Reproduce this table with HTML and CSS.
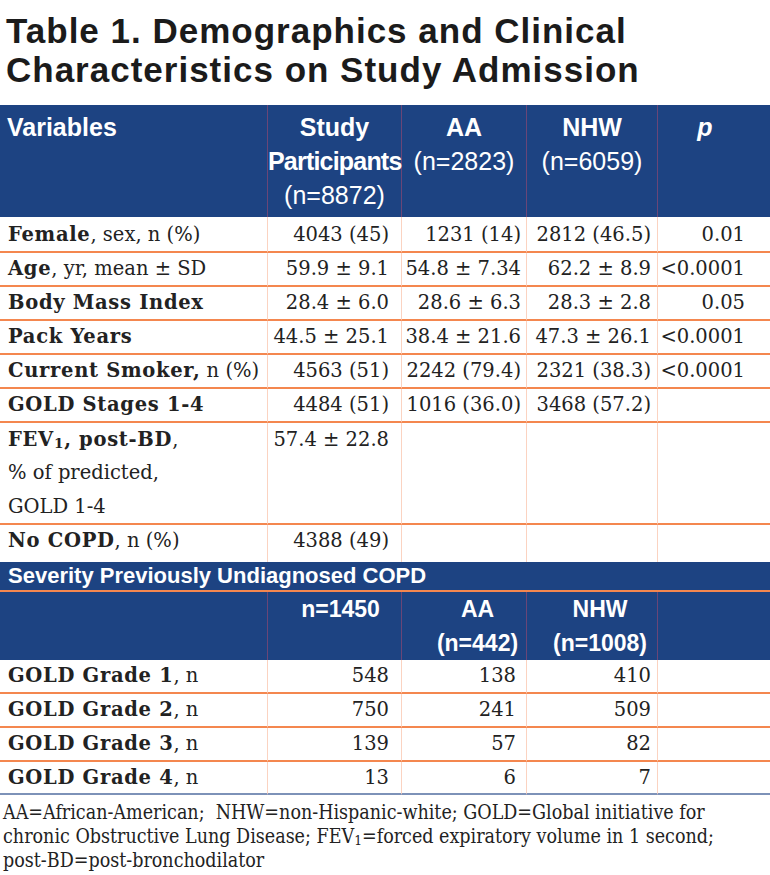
FILE: index.html
```html
<!DOCTYPE html>
<html lang="en">
<head>
<meta charset="utf-8">
<title>Table 1. Demographics and Clinical Characteristics on Study Admission</title>
<link rel="stylesheet" href="styles.css">
</head>
<body>
<div class="page">
  <h1 class="title">Table 1. Demographics and Clinical<br>Characteristics on Study Admission</h1>
  <table class="data">
    <colgroup>
      <col class="c1"><col class="c2"><col class="c3"><col class="c4"><col class="c5">
    </colgroup>
    <thead>
      <tr class="head">
        <th class="h-var">Variables</th>
        <th class="h-study">Study<br><span class="tight">Participants</span><br><span class="reg">(n=8872)</span></th>
        <th class="h-aa">AA<br><span class="reg">(n=2823)</span></th>
        <th class="h-nhw">NHW<br><span class="reg">(n=6059)</span></th>
        <th class="h-p"><i>p</i></th>
      </tr>
    </thead>
    <tbody>
      <tr class="first">
        <td class="lab"><b>Female</b>, sex, n (%)</td><td>4043 (45)</td><td>1231 (14)</td><td>2812 (46.5)</td><td>0.01</td>
      </tr>
      <tr>
        <td class="lab"><b>Age</b>, yr, mean ± SD</td><td>59.9 ± 9.1</td><td>54.8 ± 7.34</td><td>62.2 ± 8.9</td><td>&lt;0.0001</td>
      </tr>
      <tr>
        <td class="lab"><b>Body Mass Index</b></td><td>28.4 ± 6.0</td><td>28.6 ± 6.3</td><td>28.3 ± 2.8</td><td>0.05</td>
      </tr>
      <tr>
        <td class="lab"><b>Pack Years</b></td><td>44.5 ± 25.1</td><td>38.4 ± 21.6</td><td>47.3 ± 26.1</td><td>&lt;0.0001</td>
      </tr>
      <tr>
        <td class="lab"><b>Current Smoker,</b> n (%)</td><td>4563 (51)</td><td>2242 (79.4)</td><td>2321 (38.3)</td><td>&lt;0.0001</td>
      </tr>
      <tr>
        <td class="lab"><b>GOLD Stages 1-4</b></td><td>4484 (51)</td><td>1016 (36.0)</td><td>3468 (57.2)</td><td></td>
      </tr>
      <tr class="multi">
        <td class="lab"><b>FEV<sub>1</sub>, post-BD</b>,<br>% of predicted,<br>GOLD 1-4</td><td>57.4 ± 22.8</td><td></td><td></td><td></td>
      </tr>
      <tr class="nocopd">
        <td class="lab"><b>No COPD</b>, n (%)</td><td>4388 (49)</td><td></td><td></td><td></td>
      </tr>
      <tr class="section">
        <td colspan="5">Severity Previously Undiagnosed COPD</td>
      </tr>
      <tr class="head2">
        <td></td>
        <td class="h2-n">n=1450</td>
        <td class="h2-aa">AA<br>(n=442)</td>
        <td class="h2-nhw">NHW<br>(n=1008)</td>
        <td></td>
      </tr>
      <tr class="lower">
        <td class="lab"><b>GOLD Grade 1</b>, n</td><td>548</td><td>138</td><td>410</td><td></td>
      </tr>
      <tr class="lower">
        <td class="lab"><b>GOLD Grade 2</b>, n</td><td>750</td><td>241</td><td>509</td><td></td>
      </tr>
      <tr class="lower">
        <td class="lab"><b>GOLD Grade 3</b>, n</td><td>139</td><td>57</td><td>82</td><td></td>
      </tr>
      <tr class="lower end">
        <td class="lab"><b>GOLD Grade 4</b>, n</td><td>13</td><td>6</td><td>7</td><td></td>
      </tr>
    </tbody>
  </table>
  <p class="note">AA=African-American;&nbsp; NHW=non-Hispanic-white; GOLD=Global initiative for<br>chronic Obstructive Lung Disease; FEV<sub>1</sub>=forced expiratory volume in 1 second;<br>post-BD=post-bronchodilator</p>
</div>
</body>
</html>
```

FILE: styles.css
```css
body {
  margin: 0;
  background: #ffffff;
}

.page {
  width: 770px;
}

.title {
  margin: 11px 0 16px;
  padding-left: 6px;
  font-family: "Liberation Sans", Arial, sans-serif;
  font-weight: bold;
  font-size: 35px;
  line-height: 39px;
  letter-spacing: 1px;
  color: #1b1b1b;
}

.data {
  width: 770px;
  table-layout: fixed;
  border-collapse: separate;
  border-spacing: 0;
  font-family: "DejaVu Serif", serif;
  font-size: 19.5px;
  color: #222222;
}

.c1 { width: 268px; }
.c2 { width: 134px; }
.c3 { width: 125px; }
.c4 { width: 131px; }
.c5 { width: 112px; }

/* top header */
.head th {
  background: #1d4382;
  color: #ffffff;
  font-family: "Liberation Sans", Arial, sans-serif;
  font-weight: bold;
  font-size: 25px;
  line-height: 34px;
  vertical-align: top;
  text-align: center;
  padding: 5px 0;
  white-space: nowrap;
  border-right: 1px solid #6a4677;
  overflow: visible;
}

.head th:last-child {
  border-right: none;
}

.head .h-var {
  text-align: left;
  padding-left: 7px;
}

.head .h-p {
  padding-right: 18px;
}

.tight {
  letter-spacing: -0.8px;
}

.reg {
  font-weight: normal;
}

/* body cells */
.data td {
  padding: 0;
  line-height: 32px;
  text-align: right;
  white-space: nowrap;
  vertical-align: top;
  border-bottom: 2px solid #f4874f;
  border-right: 1px solid #fbd3c1;
}

.data td:last-child {
  border-right: none;
}

.data td:nth-child(2) { padding-right: 12px; }
.data td:nth-child(3) { padding-right: 5px; }
.data td:nth-child(4) { padding-right: 6px; }
.data td:nth-child(5) { padding-right: 25px; }

.data td.lab {
  text-align: left;
  padding-left: 8px;
  padding-right: 0;
}

.data b {
  font-weight: bold;
  letter-spacing: 0.7px;
}

.data sub {
  font-size: 0.7em;
  vertical-align: -0.15em;
  line-height: 0;
}

.first td {
  padding-top: 2px;
}

.multi td {
  line-height: 33.33px;
}

.nocopd td {
  border-bottom: none;
  padding-bottom: 5px;
}

/* section band */
.data .section td {
  background: #1d4382;
  color: #ffffff;
  font-family: "Liberation Sans", Arial, sans-serif;
  font-weight: bold;
  font-size: 22px;
  line-height: 28px;
  text-align: left;
  padding-left: 8px;
  border-right: none;
  border-bottom: 2px solid #f4874f;
}

/* second header */
.data .head2 td {
  background: #1d4382;
  color: #ffffff;
  font-family: "Liberation Sans", Arial, sans-serif;
  font-weight: bold;
  font-size: 23px;
  line-height: 34px;
  text-align: center;
  vertical-align: top;
  border-bottom: none;
  border-right: 1px solid #6a4677;
  padding: 0;
}

.data .head2 td:last-child {
  border-right: none;
}

.data .head2 .h2-n { padding-left: 12px; }
.data .head2 .h2-aa { padding-left: 27px; }
.data .head2 .h2-nhw { padding-left: 16px; }

.lower td:nth-child(3) { padding-right: 10px; }

.end td {
  line-height: 31px;
  border-bottom: 2px solid #7d92b8;
}

/* footnote */
.note {
  margin: 0;
  padding: 6px 0 0 3px;
  font-family: "DejaVu Serif Condensed", "DejaVu Serif", serif;
  font-stretch: condensed;
  font-size: 19.5px;
  line-height: 24px;
  color: #222222;
}

.note sub {
  font-size: 0.7em;
  vertical-align: -0.15em;
  line-height: 0;
}
```
